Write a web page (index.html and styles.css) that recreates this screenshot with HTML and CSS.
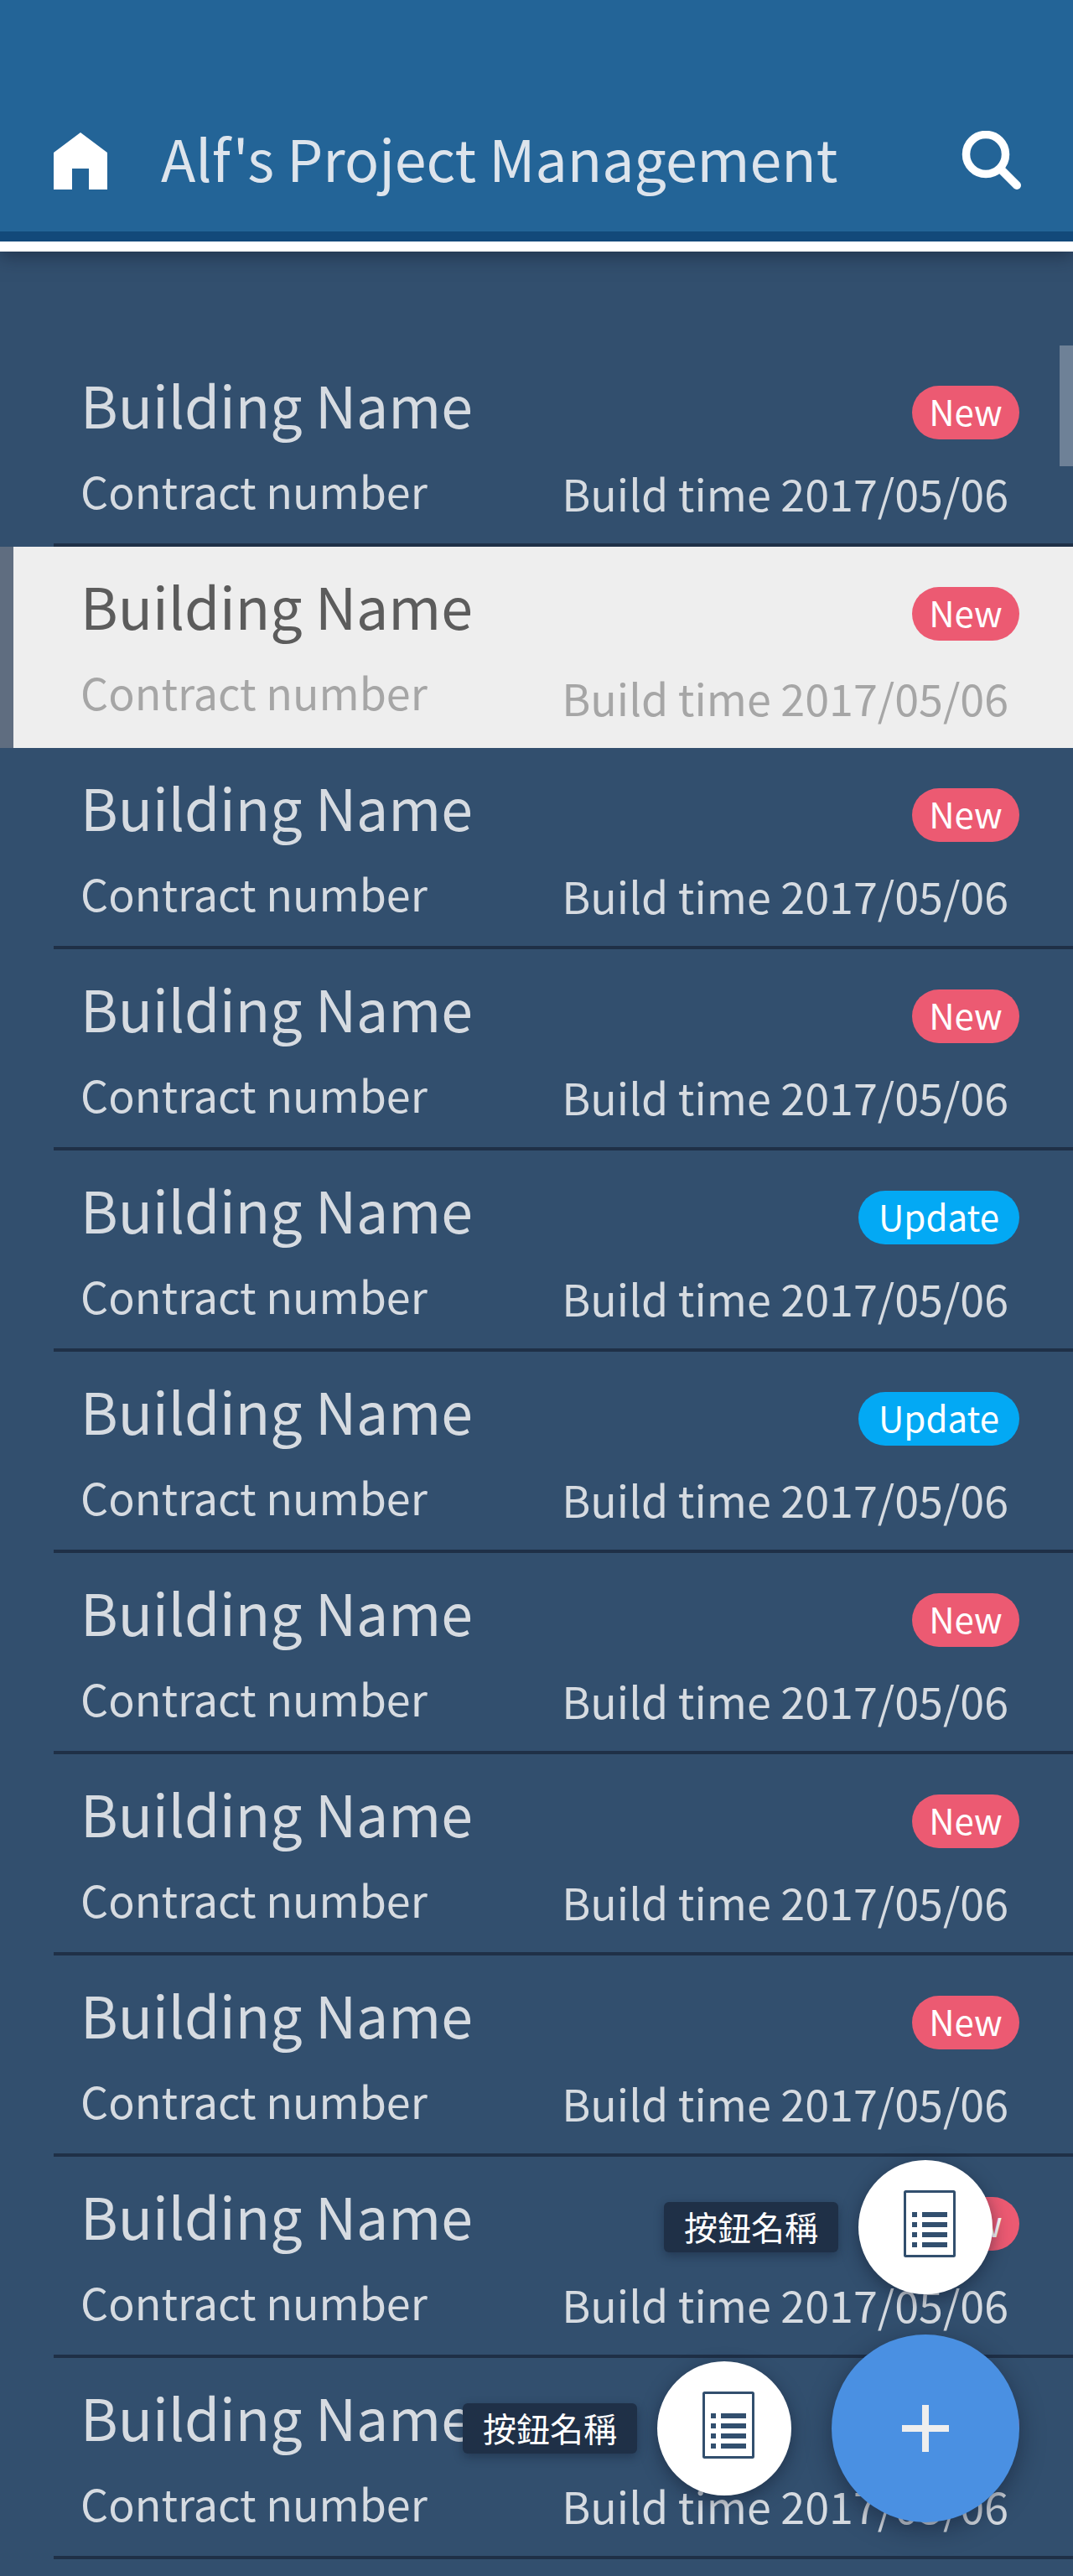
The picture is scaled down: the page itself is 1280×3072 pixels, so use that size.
FILE: index.html
```html
<!DOCTYPE html>
<html lang="en">
<head>
  <meta charset="UTF-8">
  <title>Alf's Project Management</title>
  <link rel="stylesheet" href="styles.css">
</head>
<body>
  <div class="app">
    <header class="topbar">
      <svg class="home-icon" width="64" height="68" viewBox="0 0 64 68">
        <polygon points="32,0 64,24 64,68 42,68 42,43 22,43 22,68 0,68 0,24" fill="#fff"/>
      </svg>
      <div class="topbar-title">Alf's Project Management</div>
      <svg class="search-icon" width="76" height="70" viewBox="0 0 76 70">
        <circle cx="32" cy="28" r="23.5" fill="none" stroke="#fff" stroke-width="9.5"/>
        <line x1="51" y1="47" x2="69" y2="65" stroke="#fff" stroke-width="10" stroke-linecap="round"/>
      </svg>
    </header>

    <div class="list">
      <div class="scrollbar"></div>

      <div class="row">
        <div class="row-top"><span class="name">Building Name</span><span class="badge badge-new">New</span></div>
        <div class="row-bottom"><span class="contract">Contract number</span><span class="time">Build time 2017/05/06</span></div>
      </div>
      <div class="row selected">
        <div class="row-top"><span class="name">Building Name</span><span class="badge badge-new">New</span></div>
        <div class="row-bottom"><span class="contract">Contract number</span><span class="time">Build time 2017/05/06</span></div>
      </div>
      <div class="row">
        <div class="row-top"><span class="name">Building Name</span><span class="badge badge-new">New</span></div>
        <div class="row-bottom"><span class="contract">Contract number</span><span class="time">Build time 2017/05/06</span></div>
      </div>
      <div class="row">
        <div class="row-top"><span class="name">Building Name</span><span class="badge badge-new">New</span></div>
        <div class="row-bottom"><span class="contract">Contract number</span><span class="time">Build time 2017/05/06</span></div>
      </div>
      <div class="row">
        <div class="row-top"><span class="name">Building Name</span><span class="badge badge-update">Update</span></div>
        <div class="row-bottom"><span class="contract">Contract number</span><span class="time">Build time 2017/05/06</span></div>
      </div>
      <div class="row">
        <div class="row-top"><span class="name">Building Name</span><span class="badge badge-update">Update</span></div>
        <div class="row-bottom"><span class="contract">Contract number</span><span class="time">Build time 2017/05/06</span></div>
      </div>
      <div class="row">
        <div class="row-top"><span class="name">Building Name</span><span class="badge badge-new">New</span></div>
        <div class="row-bottom"><span class="contract">Contract number</span><span class="time">Build time 2017/05/06</span></div>
      </div>
      <div class="row">
        <div class="row-top"><span class="name">Building Name</span><span class="badge badge-new">New</span></div>
        <div class="row-bottom"><span class="contract">Contract number</span><span class="time">Build time 2017/05/06</span></div>
      </div>
      <div class="row">
        <div class="row-top"><span class="name">Building Name</span><span class="badge badge-new">New</span></div>
        <div class="row-bottom"><span class="contract">Contract number</span><span class="time">Build time 2017/05/06</span></div>
      </div>
      <div class="row">
        <div class="row-top"><span class="name">Building Name</span><span class="badge badge-new">New</span></div>
        <div class="row-bottom"><span class="contract">Contract number</span><span class="time">Build time 2017/05/06</span></div>
      </div>
      <div class="row">
        <div class="row-top"><span class="name">Building Name</span><span class="badge badge-new">New</span></div>
        <div class="row-bottom"><span class="contract">Contract number</span><span class="time">Build time 2017/05/06</span></div>
      </div>
    </div>

    <div class="fab-action fab-action-top">
      <span class="fab-label">按鈕名稱</span>
      <button class="fab-small">
        <svg class="doc-icon" width="62" height="80" viewBox="0 0 62 80">
          <rect x="1.5" y="1.5" width="59" height="77" rx="1" fill="none" stroke="#324f6e" stroke-width="3"/>
          <path d="M10 26h6v6h-6zM22 26h30v6h-30zM10 38h6v6h-6zM22 38h30v6h-30zM10 50h6v6h-6zM22 50h30v6h-30zM10 62h6v6h-6zM22 62h30v6h-30z" fill="#324f6e"/>
        </svg>
      </button>
    </div>
    <div class="fab-action fab-action-left">
      <span class="fab-label">按鈕名稱</span>
      <button class="fab-small">
        <svg class="doc-icon" width="62" height="80" viewBox="0 0 62 80">
          <rect x="1.5" y="1.5" width="59" height="77" rx="1" fill="none" stroke="#324f6e" stroke-width="3"/>
          <path d="M10 26h6v6h-6zM22 26h30v6h-30zM10 38h6v6h-6zM22 38h30v6h-30zM10 50h6v6h-6zM22 50h30v6h-30zM10 62h6v6h-6zM22 62h30v6h-30z" fill="#324f6e"/>
        </svg>
      </button>
    </div>
    <button class="fab-main">
      <svg width="56" height="56" viewBox="0 0 56 56">
        <path d="M24 0h8v24h24v8h-24v24h-8v-24h-24v-8h24z" fill="#eee"/>
      </svg>
    </button>
  </div>
</body>
</html>
```

FILE: styles.css
```css
/* page */
html, body {
  margin: 0;
  padding: 0;
}

body {
  font-family: "Noto Sans CJK TC", "Noto Sans", sans-serif;
  background-color: #324f6e;
}

.app {
  position: relative;
  width: 1280px;
  height: 3072px;
  overflow: hidden;
  background-color: #324f6e;
}

/* top bar */
.topbar {
  position: relative;
  z-index: 2;
  box-sizing: border-box;
  display: flex;
  align-items: flex-end;
  height: 300px;
  padding: 0 60px 62px 64px;
  background-color: #236497;
  border-bottom: 12px solid #fff;
  box-shadow: inset 0 -12px 0 #12497a, 0 6px 20px rgba(20, 30, 50, 0.5);
}

.topbar-title {
  margin-left: 64px;
  margin-bottom: 4px;
  font-size: 68px;
  line-height: 68px;
  font-weight: 400;
  color: #dde4ec;
  white-space: nowrap;
}

.search-icon {
  margin-left: auto;
}

/* list */
.list {
  position: relative;
  padding-top: 112px;
}

.scrollbar {
  position: absolute;
  top: 112px;
  right: 0;
  width: 16px;
  height: 144px;
  background-color: #6e8197;
}

.row {
  box-sizing: border-box;
  height: 240px;
  padding: 28px 64px 0 96px;
  position: relative;
  color: #d6dbe1;
}

.row::after {
  content: "";
  position: absolute;
  left: 64px;
  right: 0;
  bottom: 0;
  height: 4px;
  background-color: #1f3047;
}

.row-top {
  display: flex;
  justify-content: space-between;
  align-items: center;
  height: 84px;
}

.row-bottom {
  display: flex;
  justify-content: space-between;
  align-items: flex-end;
  padding-right: 13px;
  height: 94px;
}

.name {
  font-size: 68px;
  line-height: 84px;
  font-weight: 400;
}

.contract {
  font-size: 52px;
  line-height: 60px;
  font-weight: 400;
  padding-bottom: 3px;
}

.time {
  font-size: 52px;
  line-height: 60px;
  font-weight: 400;
}

.badge {
  box-sizing: border-box;
  height: 64px;
  margin-top: 20px;
  line-height: 60px;
  border-radius: 32px;
  font-size: 42px;
  text-align: center;
  color: #fff;
}

.badge-new {
  width: 128px;
  background-color: #ec5a72;
}

.badge-update {
  width: 192px;
  background-color: #03a9f4;
}

.selected {
  background-color: #eee;
  border-left: 16px solid #5f6d80;
  color: #5c5c5c;
}

.selected .row-top,
.selected .row-bottom {
  margin-left: -16px;
}

.selected::after {
  display: none;
}

.selected .contract,
.selected .time {
  color: #a6a6a6;
}

.selected .time {
  margin-bottom: -4px;
}

/* floating buttons */
.fab-main {
  position: absolute;
  left: 992px;
  top: 2784px;
  display: flex;
  justify-content: center;
  align-items: center;
  width: 224px;
  height: 224px;
  padding: 0;
  border: none;
  border-radius: 50%;
  background-color: #4a90e2;
  box-shadow: 0 8px 28px rgba(15, 25, 45, 0.5);
}

.fab-action {
  position: absolute;
  display: flex;
  align-items: center;
  gap: 24px;
}

.fab-action-top {
  left: 792px;
  top: 2576px;
}

.fab-action-left {
  left: 552px;
  top: 2816px;
}

.fab-label {
  box-sizing: border-box;
  width: 208px;
  height: 60px;
  line-height: 58px;
  text-align: center;
  font-size: 40px;
  color: #fff;
  background-color: #1f3047;
  border-radius: 6px;
  box-shadow: 0 4px 12px rgba(15, 25, 45, 0.4);
}

.fab-small {
  display: flex;
  justify-content: center;
  align-items: center;
  width: 160px;
  height: 160px;
  padding: 0;
  border: none;
  border-radius: 50%;
  background-color: #fff;
  box-shadow: 0 6px 20px rgba(15, 25, 45, 0.5);
}

.doc-icon {
  margin-left: 10px;
  margin-bottom: 8px;
}
```
